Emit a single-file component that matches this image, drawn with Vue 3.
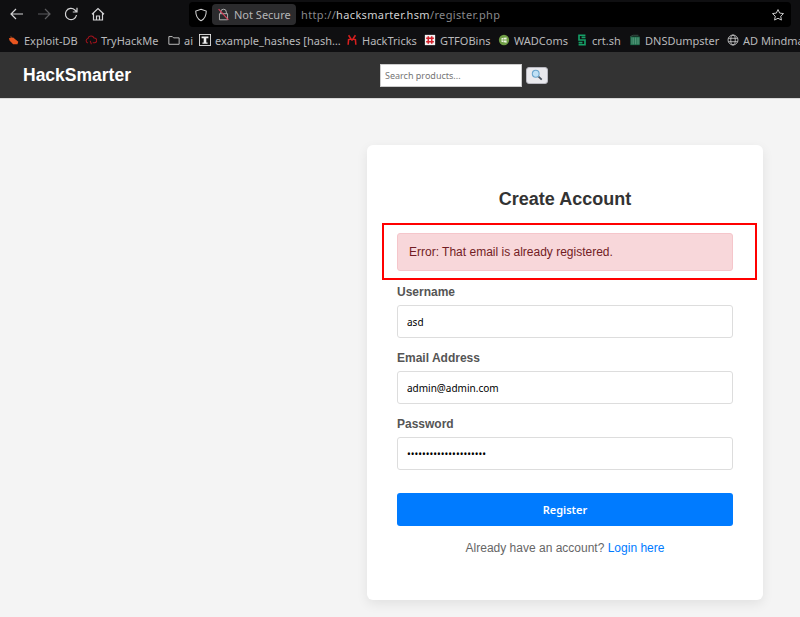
<script setup>
const bookmarks = [
  { name: 'Exploit-DB', icon: 'flame', width: 77 },
  { name: 'TryHackMe', icon: 'cloud', width: 83 },
  { name: 'ai', icon: 'folder', width: 31 },
  { name: 'example_hashes [hash…', icon: 'doc', width: 147 },
  { name: 'HackTricks', icon: 'tricks', width: 78 },
  { name: 'GTFOBins', icon: 'gtfo', width: 74 },
  { name: 'WADComs', icon: 'wad', width: 78 },
  { name: 'crt.sh', icon: 'crt', width: 53 },
  { name: 'DNSDumpster', icon: 'dns', width: 98 },
  { name: 'AD Mindmap', icon: 'globe', width: 90 },
]

const fields = [
  { label: 'Username', type: 'text', value: 'asd' },
  { label: 'Email Address', type: 'text', value: 'admin@admin.com' },
  { label: 'Password', type: 'password', value: 'aaaaaaaaaaaaaaaaaaaaa' },
]
</script>

<template>
  <div class="page">
    <div class="browser">
      <div class="toolbar">
        <div class="nav">
          <svg viewBox="0 0 16 16" class="nav-icon"><path d="M14 8H2.5M7 3 2 8l5 5" /></svg>
          <svg viewBox="0 0 16 16" class="nav-icon off"><path d="M2 8h11.5M9 3l5 5-5 5" /></svg>
          <svg viewBox="0 0 16 16" class="nav-icon"><path d="M13.5 9a5.6 5.6 0 1 1-1.6-5L14 6M14 1.8V6H9.8" /></svg>
          <svg viewBox="0 0 16 16" class="nav-icon"><path d="M2 8.2 8 2.5l6 5.7M3.5 7v7h9V7M6.5 14v-4h3v4" /></svg>
        </div>
        <div class="urlbar">
          <svg viewBox="0 0 16 16" class="shield"><path d="M8 1.5 14 3.5c0 5-1.5 9-6 11-4.500-2-6-6-6-11z" /></svg>
          <div class="secure">
            <svg viewBox="0 0 16 16" class="lock">
              <path d="M4.500 7V5a3.500 3.500 0 0 1 7 0v2M3 7h10v7.500H3z" />
              <path class="slash" d="M2 1.500 14 14.500" />
            </svg>
            <span>Not Secure</span>
          </div>
          <div class="url">http://<b>hacksmarter.hsm</b>/register.php</div>
          <svg viewBox="0 0 16 16" class="star"><path d="m8 1.800 1.900 4 4.400.6-3.200 3 .8 4.400L8 11.700l-3.900 2.100.8-4.400-3.200-3 4.400-.6z" /></svg>
        </div>
      </div>
      <div class="bookmarks">
        <div v-for="b in bookmarks" :key="b.name" class="bookmark" :style="{ width: b.width + 'px' }">
          <svg viewBox="0 0 14 14" class="favicon">
            <template v-if="b.icon === 'flame'">
              <path d="M1 5 6 4 12 9 11 12H6L2 8z" fill="#e8551f" />
              <path d="M3 2 5 4 3 5z" fill="#9a4a20" />
            </template>
            <path v-else-if="b.icon === 'cloud'" d="M3.500 10.500a2.700 2.700 0 0 1 0-5.300 3.700 3.700 0 0 1 7-.6 2.900 2.900 0 0 1 1 5.700H9M6 8l1.500 4" fill="none" stroke="#a3131c" stroke-width="1.200" />
            <path v-else-if="b.icon === 'folder'" d="M1 3h4l1.500 1.500H13V12H1z" fill="none" stroke="#d6d6d6" stroke-width="1" />
            <template v-else-if="b.icon === 'doc'">
              <rect x=".5" y=".5" width="13" height="13" fill="#111" stroke="#eee" />
              <path d="M3 3h8v2H8.500v5H10v1.500H4V10h1.500V5H3z" fill="#eee" />
            </template>
            <path v-else-if="b.icon === 'tricks'" d="M3 1.500 6 6l-3 .5-.5 6M11 1.500 8 6l3 .5.500 6M6 7h2" fill="none" stroke="#d8201f" stroke-width="1.800" />
            <template v-else-if="b.icon === 'gtfo'">
              <rect x="1" y="1" width="12" height="12" fill="#f2f2f2" />
              <path d="M5 2.500v9M9 2.500v9M2.500 5h9M2.500 9h9" stroke="#d3202a" stroke-width="1.800" />
            </template>
            <template v-else-if="b.icon === 'wad'">
              <circle cx="7" cy="7" r="6" fill="#6f9e45" />
              <path d="M4 5l2.500-.5v2L4 6.700zM7 4.400 10 4v2.500L7 6.500zM4 7.300l2.500.2v2L4 9zM7 7.500l3 .1v2.500l-3-.5z" fill="#eef4e4" />
            </template>
            <path v-else-if="b.icon === 'crt'" d="M11 1.500H3.500v5.500H10.500v5.500H3M6.500 4H11M3 10h4.500" fill="none" stroke="#16a067" stroke-width="1.900" />
            <template v-else-if="b.icon === 'dns'">
              <rect x="1.500" y="3" width="11" height="10" fill="#1d6b4a" />
              <path d="M3.500 4v8M5.500 4v8M7.500 4v8M9.500 4v8M11.500 4v8" stroke="#7ab79b" stroke-width=".7" />
              <path d="M1.500 3 5 1.500h6" stroke="#3a5a4c" fill="none" />
            </template>
            <g v-else fill="none" stroke="#d8d8d8" stroke-width=".9">
              <circle cx="7" cy="7" r="5.800" />
              <ellipse cx="7" cy="7" rx="2.600" ry="5.800" />
              <path d="M1.500 5h11M1.500 9h11" />
            </g>
          </svg>
          <span>{{ b.name }}</span>
        </div>
      </div>
    </div>

    <header class="site-header">
      <div class="brand">HackSmarter</div>
      <form class="search" @submit.prevent>
        <input class="search-input" type="text" placeholder="Search products...">
        <button class="search-btn" type="button">
          <svg viewBox="0 0 14 14" class="glass">
            <path d="m8.500 8.500 4 4" stroke="#4a5560" stroke-width="2" />
            <circle cx="5.500" cy="5.500" r="4" fill="#bfe0f5" stroke="#6aa5cc" stroke-width="1.200" />
          </svg>
        </button>
      </form>
    </header>

    <main class="content">
      <section class="card">
        <h2>Create Account</h2>
        <div class="alert">Error: That email is already registered.</div>
        <div class="highlight"></div>
        <div v-for="f in fields" :key="f.label" class="field">
          <label>{{ f.label }}</label>
          <input :type="f.type" :value="f.value" readonly>
        </div>
        <button class="submit" type="button">Register</button>
        <p class="switch">Already have an account? <a href="#">Login here</a></p>
      </section>
    </main>
  </div>
</template>

<style scoped>
.page {
  height: 617px;
  overflow: hidden;
  background: #f4f4f4;
  font-family: "Liberation Sans", Arial, sans-serif;
}
.browser {
  height: 52px;
  background: #0f0f11;
  color: #c9c9cb;
  font-family: "Noto Sans", sans-serif;
}
.toolbar {
  height: 28px;
  display: flex;
  align-items: center;
}
.nav {
  width: 189px;
  padding-left: 9px;
  box-sizing: border-box;
  display: flex;
  gap: 11px;
  flex-shrink: 0;
}
.nav-icon {
  width: 16px;
  height: 16px;
  fill: none;
  stroke: #d4d4d6;
  stroke-width: 1.200;
}
.nav-icon.off {
  stroke: #5d5d60;
}
.urlbar {
  width: 602px;
  height: 25px;
  margin-top: 1px;
  background: #000;
  border-radius: 4px;
  display: flex;
  align-items: center;
  flex-shrink: 0;
}
.shield {
  width: 14px;
  height: 14px;
  margin-left: 5px;
  fill: none;
  stroke: #cfcfcf;
  stroke-width: 1.200;
}
.secure {
  margin-left: 4px;
  width: 84px;
  height: 21px;
  background: #2b2b2d;
  border-radius: 4px;
  display: flex;
  align-items: center;
  gap: 4px;
  padding-left: 5px;
  box-sizing: border-box;
  font-size: 11px;
  color: #b5b5b7;
}
.lock {
  width: 13px;
  height: 13px;
  fill: none;
  stroke: #bdbdbd;
  stroke-width: 1.100;
  flex-shrink: 0;
}
.lock .slash {
  stroke: #e0405c;
  stroke-width: 1.300;
}
.url {
  margin-left: 5px;
  font-size: 11px;
  letter-spacing: .35px;
  color: #88888b;
  flex: 1;
}
.url b {
  font-weight: 400;
  color: #d0d0d2;
}
.star {
  width: 14px;
  height: 14px;
  margin-right: 6px;
  fill: none;
  stroke: #d0d0d0;
  stroke-width: 1.100;
}
.bookmarks {
  height: 24px;
  display: flex;
  align-items: center;
  padding-left: 8px;
  overflow: hidden;
  font-size: 11px;
  white-space: nowrap;
}
.bookmark {
  display: flex;
  align-items: center;
  gap: 4px;
  flex-shrink: 0;
  color: #b9b9bb;
}
.favicon {
  width: 12px;
  height: 12px;
  flex-shrink: 0;
}
.site-header {
  height: 47px;
  background: #333;
  border-bottom: 1px solid #d8d8d8;
  box-sizing: border-box;
  display: flex;
  align-items: center;
  position: relative;
  padding-left: 23px;
}
.brand {
  width: 357px;
  color: #fff;
  font-size: 17.500px;
  font-weight: 700;
}
.search {
  display: flex;
  align-items: center;
  gap: 4px;
}
.search-input {
  width: 142px;
  height: 23px;
  box-sizing: border-box;
  border: 1px solid #ccc;
  padding: 0 4px;
  background: #fff;
  font-family: "Noto Sans", sans-serif;
  font-size: 9px;
  outline: none;
}
.search-input::placeholder {
  color: #757575;
}
.search-btn {
  width: 22px;
  height: 17px;
  padding: 0;
  border: 1px solid #b8b8c0;
  border-radius: 3px;
  background: #e9e9ed;
  display: flex;
  align-items: center;
  justify-content: center;
}
.glass {
  width: 12px;
  height: 12px;
}
.content {
  padding: 46px 0 0 367px;
}
.card {
  position: relative;
  width: 396px;
  height: 455px;
  box-sizing: border-box;
  padding: 30px;
  background: #fff;
  border-radius: 6px;
  box-shadow: 0 4px 12px rgba(0, 0, 0, .08);
}
h2 {
  margin: 14px 0 0;
  text-align: center;
  font-size: 18px;
  line-height: 21px;
  color: #333;
}
.alert {
  margin-top: 23px;
  height: 38px;
  box-sizing: border-box;
  padding: 0 11px;
  line-height: 36px;
  font-size: 12px;
  color: #721c24;
  background: #f8d7da;
  border: 1px solid #f5c6cb;
  border-radius: 3px;
}
/* red box drawn over the screenshot */
.highlight {
  position: absolute;
  left: 15px;
  top: 78px;
  width: 375px;
  height: 57px;
  box-sizing: border-box;
  border: 2px solid #f00;
  pointer-events: none;
}
.field {
  margin-top: 14px;
}
.field + .field {
  margin-top: 13px;
}
label {
  display: block;
  margin-bottom: 6px;
  font-size: 12px;
  line-height: 14px;
  font-weight: 700;
  color: #555;
}
input[readonly] {
  display: block;
  width: 100%;
  height: 33px;
  box-sizing: border-box;
  padding: 0 9px;
  border: 1px solid #ddd;
  border-radius: 3px;
  background: #fff;
  color: #000;
  font-family: "Noto Sans", sans-serif;
  font-size: 10px;
  outline: none;
}
.submit {
  display: block;
  width: 100%;
  height: 33px;
  margin-top: 23px;
  border: 0;
  border-radius: 3px;
  background: #007bff;
  color: #fff;
  font-family: "Noto Sans", sans-serif;
  font-size: 11px;
  font-weight: 600;
}
.switch {
  margin: 15px 0 0;
  text-align: center;
  font-size: 12px;
  line-height: 14px;
  color: #666;
}
.switch a {
  color: #007bff;
  text-decoration: none;
}
</style>
